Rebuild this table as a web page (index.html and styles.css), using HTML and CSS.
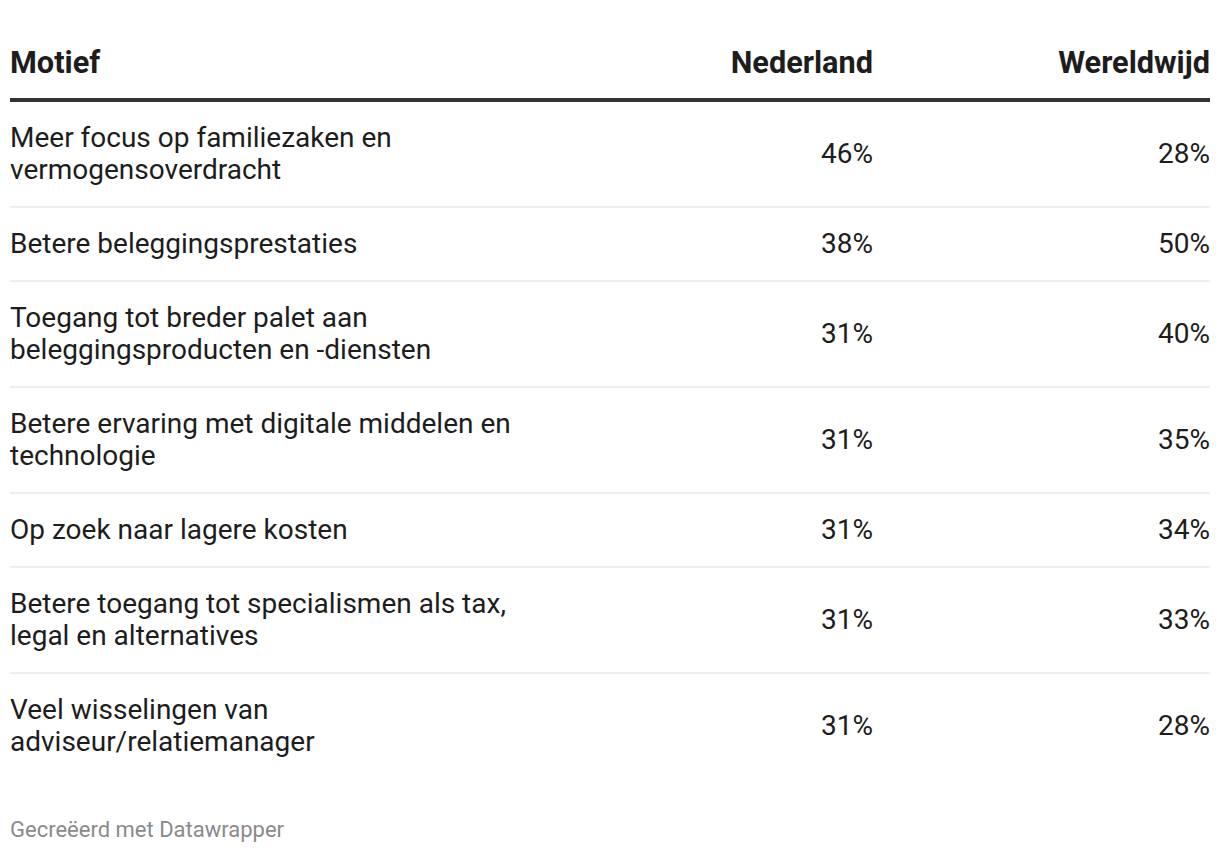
FILE: index.html
```html
<!DOCTYPE html>
<html lang="nl">
<head>
<meta charset="utf-8">
<title>Motief</title>
<link rel="stylesheet" href="styles.css">
</head>
<body>
<div class="wrap">
  <table class="tbl">
    <thead>
      <tr>
        <th class="c1">Motief</th>
        <th class="c2">Nederland</th>
        <th class="c3">Wereldwijd</th>
      </tr>
    </thead>
    <tbody>
      <tr><td class="c1">Meer focus op familiezaken en vermogensoverdracht</td><td class="c2">46%</td><td class="c3">28%</td></tr>
      <tr><td class="c1">Betere beleggingsprestaties</td><td class="c2">38%</td><td class="c3">50%</td></tr>
      <tr><td class="c1">Toegang tot breder palet aan beleggingsproducten en -diensten</td><td class="c2">31%</td><td class="c3">40%</td></tr>
      <tr><td class="c1">Betere ervaring met digitale middelen en technologie</td><td class="c2">31%</td><td class="c3">35%</td></tr>
      <tr><td class="c1">Op zoek naar lagere kosten</td><td class="c2">31%</td><td class="c3">34%</td></tr>
      <tr><td class="c1">Betere toegang tot specialismen als tax, legal en alternatives</td><td class="c2">31%</td><td class="c3">33%</td></tr>
      <tr><td class="c1">Veel wisselingen van adviseur/relatiemanager</td><td class="c2">31%</td><td class="c3">28%</td></tr>
    </tbody>
  </table>
  <div class="footer">Gecreëerd met Datawrapper</div>
</div>
</body>
</html>
```
FILE: styles.css
```css
html, body {
  margin: 0;
  padding: 0;
  background: #fff;
}
body {
  font-family: Roboto, "Liberation Sans", sans-serif;
  color: #1d1d1d;
}
.wrap {
  padding: 40px 10px 0 10px;
}
.tbl {
  width: 1200px;
  border-collapse: collapse;
  table-layout: fixed;
}
.tbl th {
  font-size: 30.7px;
  font-weight: 700;
  line-height: 36px;
  padding: 5px 0 17px 0;
  border-bottom: 4px solid #333;
  color: #1d1d1d;
}
.tbl td {
  font-size: 28px;
  line-height: 32px;
  padding: 20px 0 20px 0;
  border-bottom: 2px solid #eeeeee;
  vertical-align: middle;
}
.tbl tbody tr:last-child td {
  border-bottom: none;
}
.c1 {
  width: 515px;
  text-align: left;
}
.c2 {
  width: 348px;
  text-align: right;
}
.c3 {
  text-align: right;
}
.footer {
  margin-top: 40px;
  font-size: 22px;
  line-height: 24px;
  color: #8a8a8a;
}
```
